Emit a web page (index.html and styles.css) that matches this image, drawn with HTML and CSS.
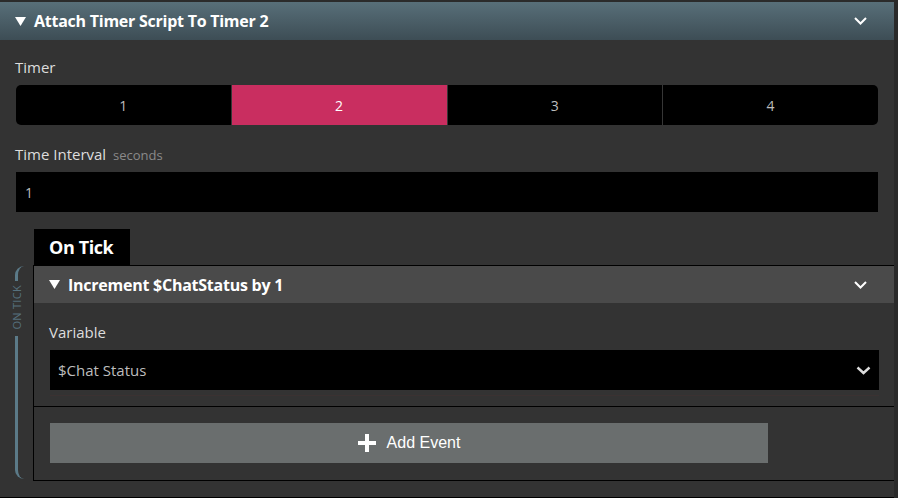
FILE: index.html
```html
<!DOCTYPE html>
<html lang="en">
<head>
    <meta charset="UTF-8">
    <meta name="viewport" content="width=device-width, initial-scale=1.0">
    <title>Attach Timer Script</title>
    <link rel="stylesheet" href="styles.css">
</head>
<body>

    <div class="panel">

        <!-- Block header -->
        <div class="block-header">
            <span class="caret"><svg width="11" height="9" viewBox="0 0 11 9"><polygon points="0,0 11,0 5.5,9" fill="#fff"/></svg></span>
            <span class="block-title">Attach Timer Script To Timer 2</span>
            <svg class="chevron" width="13" height="8" viewBox="0 0 13 8"><polyline points="1,1 6.5,6.5 12,1" fill="none" stroke="#fff" stroke-width="2"/></svg>
        </div>

        <div class="block-body">
            <div class="field-label">Timer</div>
            <div class="segments">
                <div class="segment">1</div>
                <div class="segment active">2</div>
                <div class="segment">3</div>
                <div class="segment">4</div>
            </div>

            <div class="field-label">Time Interval <span class="unit">seconds</span></div>
            <div class="text-input">1</div>
        </div>

        <!-- Event slot -->
        <div class="event-row">
            <div class="rail">
                <div class="rail-top"></div>
                <div class="rail-text">ON TICK</div>
                <div class="rail-bottom"></div>
            </div>

            <div class="event-col">
                <div class="tab">On Tick</div>
                <div class="event-box">

                    <div class="item">
                        <div class="item-header">
                            <span class="caret"><svg width="11" height="9" viewBox="0 0 11 9"><polygon points="0,0 11,0 5.5,9" fill="#fff"/></svg></span>
                            <span class="item-title">Increment $ChatStatus by 1</span>
                            <svg class="chevron" width="13" height="8" viewBox="0 0 13 8"><polyline points="1,1 6.5,6.5 12,1" fill="none" stroke="#fff" stroke-width="2"/></svg>
                        </div>
                        <div class="item-body">
                            <div class="field-label">Variable</div>
                            <div class="select">
                                <span>$Chat Status</span>
                                <svg width="15" height="9" viewBox="0 0 15 9"><polyline points="1.5,1.5 7.5,7 13.5,1.5" fill="none" stroke="#ddd" stroke-width="2.4"/></svg>
                            </div>
                            <div class="item-rule"></div>
                        </div>
                    </div>

                    <div class="add-area">
                        <button type="button" class="add-btn">
                            <svg width="18" height="18" viewBox="0 0 18 18"><rect x="7" y="0" width="4" height="18" fill="#fff"/><rect x="0" y="7" width="18" height="4" fill="#fff"/></svg>
                            Add Event
                        </button>
                    </div>

                </div>
            </div>
        </div>

        <div class="panel-end"></div>
    </div>

    <div class="scroll-edge"></div>

</body>
</html>
```

FILE: styles.css
```css
body {
    margin: 0;
    height: 498px;
    display: flex;
    background: #333333;
    font-family: "Open Sans", "Noto Sans", sans-serif;
    color: #dddddd;
    overflow: hidden;
}

.panel {
    width: 894px;
    display: flex;
    flex-direction: column;
}

.scroll-edge {
    width: 4px;
    background: #2a2a2a;
}

.block-header {
    height: 38px;
    border-top: 2px solid #2b2b2b;
    background: linear-gradient(#586f79, #3d4d55);
    display: flex;
    align-items: center;
    padding: 0 27px 0 15px;
    color: #fff;
}

.caret {
    display: flex;
    margin-right: 8px;
}

.block-title {
    flex: 1;
    font-size: 16px;
    font-weight: 700;
    letter-spacing: -0.25px;
}

.block-body {
    padding: 17px 16px 0 16px;
}

.field-label {
    font-size: 15px;
    line-height: 20px;
    height: 20px;
    margin-left: -1px;
    margin-bottom: 8px;
}

.unit {
    font-size: 13px;
    line-height: 1;
    color: #8a8a8a;
    margin-left: 3px;
}

.segments {
    display: flex;
    height: 40px;
    background: #000;
    border-radius: 5px;
    overflow: hidden;
    margin-bottom: 19px;
}

.segment {
    flex: 1;
    display: flex;
    align-items: center;
    justify-content: center;
    font-size: 14px;
    color: #bdbdbd;
    border-left: 1px solid #363636;
}

.segment:first-child {
    border-left: none;
}

.segment.active {
    background: #c92e60;
    color: #fff;
}

.text-input {
    height: 40px;
    background: #000;
    color: #bdbdbd;
    font-size: 14px;
    display: flex;
    align-items: center;
    padding-left: 9px;
}

.event-row {
    display: flex;
    padding-left: 11px;
    margin-top: 17px;
}

.rail {
    width: 22px;
    display: flex;
    flex-direction: column;
    margin-top: 37px;
    margin-bottom: 2px;
}

.rail-top {
    height: 15px;
    width: 6px;
    margin-left: 4px;
    border-left: 3px solid #5b7a88;
    border-top-left-radius: 9px;
}

.rail-text {
    writing-mode: vertical-rl;
    transform: rotate(180deg);
    font-size: 11px;
    line-height: 11px;
    letter-spacing: 0.3px;
    color: #56717e;
    width: 11px;
    margin: 4px 0 6px 0;
}

.rail-bottom {
    flex: 1;
    width: 6px;
    margin-left: 4px;
    border-left: 3px solid #5b7a88;
    border-bottom-left-radius: 9px;
}

.event-col {
    flex: 1;
    display: flex;
    flex-direction: column;
}

.tab {
    align-self: flex-start;
    margin-left: 1px;
    width: 81px;
    height: 36px;
    padding-left: 15px;
    background: #000;
    color: #fff;
    font-size: 18px;
    font-weight: 700;
    display: flex;
    align-items: center;
    letter-spacing: -0.4px;
}

.event-box {
    border: 1px solid #000;
    border-right: none;
}

.item {
    border-bottom: 1px solid #000;
}

.item-header {
    height: 37px;
    background: #4a4a4a;
    display: flex;
    align-items: center;
    padding: 0 27px 0 15px;
    color: #fff;
}

.item-title {
    flex: 1;
    font-size: 16px;
    font-weight: 700;
    letter-spacing: -0.25px;
}

.item-body {
    padding: 19px 15px 0 16px;
}

.select {
    height: 40px;
    background: #000;
    color: #bdbdbd;
    font-size: 15px;
    display: flex;
    align-items: center;
    justify-content: space-between;
    padding: 0 8px 0 8px;
}

.item-rule {
    height: 1px;
    background: #3b3232;
    margin: 5px 0 10px 0;
}

.add-area {
    padding: 16px 0 17px 16px;
}

.add-btn {
    width: 718px;
    height: 40px;
    border: none;
    background: #6a6e6e;
    color: #fff;
    font-family: "Liberation Sans", Arial, sans-serif;
    font-size: 16px;
    display: flex;
    align-items: center;
    justify-content: center;
    gap: 11px;
    padding: 0;
}

.panel-end {
    margin-top: 16px;
    border-top: 1px solid #000;
}
```
